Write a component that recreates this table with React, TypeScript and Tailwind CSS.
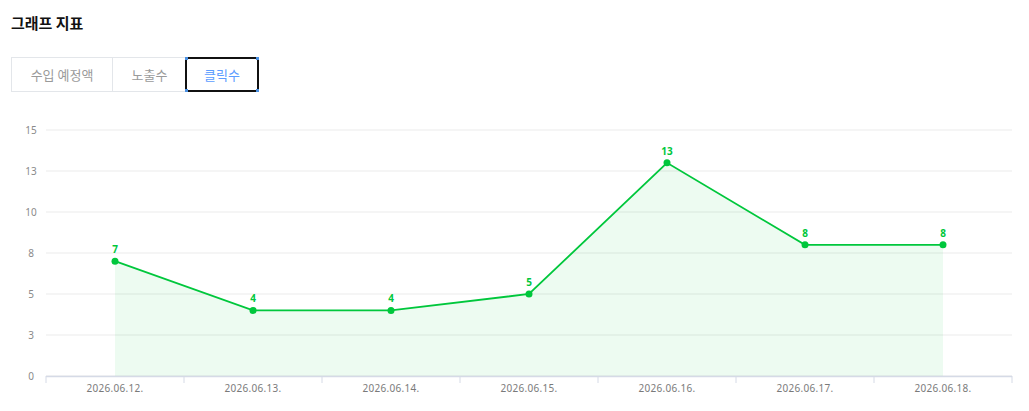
import React from 'react';

const data = [
  { date: '2026.06.12.', value: 7 },
  { date: '2026.06.13.', value: 4 },
  { date: '2026.06.14.', value: 4 },
  { date: '2026.06.15.', value: 5 },
  { date: '2026.06.16.', value: 13 },
  { date: '2026.06.17.', value: 8 },
  { date: '2026.06.18.', value: 8 },
];

const ticks = [15, 12.5, 10, 7.5, 5, 2.5, 0];

// plot geometry in page coordinates
const LEFT = 46;
const RIGHT = 1012;
const TOP = 130;
const BOTTOM = 376;
const STEP = (RIGHT - LEFT) / data.length;
const yOf = (v: number) => BOTTOM - (v / 15) * (BOTTOM - TOP);
const xOf = (i: number) => LEFT + STEP * i + STEP / 2;

const SVG_TOP = 110;

const Chart: React.FC = () => {
  const pts = data.map((d, i) => [xOf(i), yOf(d.value)] as const);
  const line = pts.map(([x, y], i) => `${i ? 'L' : 'M'}${x},${y}`).join(' ');
  const area = `${line} L${pts[pts.length - 1][0]},${BOTTOM} L${pts[0][0]},${BOTTOM} Z`;

  return (
    <svg width={1029} height={301} className="block" style={{ fontFamily: '"Noto Sans", "Noto Sans CJK KR", sans-serif' }}>
      <g transform={`translate(0,-${SVG_TOP})`}>
        {ticks.map((t) => (
          <g key={t}>
            <line x1={LEFT} x2={RIGHT} y1={yOf(t)} y2={yOf(t)} stroke="#ebebeb" strokeWidth={1} />
            <text x={31} y={yOf(t) + 3.5} fontSize={10} fill="#8a8a8a" textAnchor="middle">
              {Math.round(t)}
            </text>
          </g>
        ))}
        <path d={area} fill="#00c73c" fillOpacity={0.07} />
        <line x1={LEFT} x2={RIGHT} y1={BOTTOM + 0.5} y2={BOTTOM + 0.5} stroke="#d5dae6" strokeWidth={1.5} />
        {Array.from({ length: data.length + 1 }).map((_, i) => (
          <line key={i} x1={LEFT + STEP * i} x2={LEFT + STEP * i} y1={BOTTOM} y2={BOTTOM + 7} stroke="#d5dae6" strokeWidth={1} />
        ))}
        <path d={line} fill="none" stroke="#00c73c" strokeWidth={1.8} />
        {pts.map(([x, y], i) => (
          <g key={i}>
            <circle cx={x} cy={y} r={3.5} fill="#00c73c" />
            <text x={x} y={y - 8} fontSize={10} fontWeight={700} fill="#00c73c" textAnchor="middle">
              {data[i].value}
            </text>
          </g>
        ))}
        {data.map((d, i) => (
          <text key={d.date} x={xOf(i)} y={BOTTOM + 16} fontSize={10} fill="#7a7a7a" textAnchor="middle" letterSpacing={0.3}>
            {d.date}
          </text>
        ))}
      </g>
    </svg>
  );
};

const App: React.FC = () => {
  const tabs = ['수입 예정액', '노출수', '클릭수'];
  const active = 2;

  return (
    <div className="w-[1029px] h-[411px] bg-white overflow-hidden" style={{ fontFamily: '"Noto Sans CJK KR", "Noto Sans", sans-serif' }}>
      {/* Title */}
      <h2 className="pl-[11px] pt-[13px] text-[15px] leading-[20px] font-bold text-[#111]">그래프 지표</h2>

      {/* Tabs */}
      <div className="mt-[24px] ml-[11px] flex h-[35px] w-fit border border-[#e3e6ea]">
        {tabs.map((t, i) =>
          i === active ? (
            <div key={t} className="relative -m-px flex w-[74px] items-center justify-center rounded-[3px] border-2 border-[#111] text-[13px] text-[#5c9dff]">
              {t}
              <span className="absolute -left-[2px] -top-[2px] h-[3px] w-[3px] bg-[#4a90e2]" />
              <span className="absolute -right-[2px] -top-[2px] h-[3px] w-[3px] bg-[#4a90e2]" />
              <span className="absolute -left-[2px] -bottom-[2px] h-[3px] w-[3px] bg-[#4a90e2]" />
              <span className="absolute -right-[2px] -bottom-[2px] h-[3px] w-[3px] bg-[#4a90e2]" />
            </div>
          ) : (
            <div
              key={t}
              className={`flex items-center justify-center text-[13px] text-[#9a9a9a] ${i === 0 ? 'w-[101px] border-r border-[#e3e6ea]' : 'w-[73px]'}`}
            >
              {t}
            </div>
          )
        )}
      </div>

      {/* Chart */}
      <div className="mt-[18px]">
        <Chart />
      </div>
    </div>
  );
};

export default App;
